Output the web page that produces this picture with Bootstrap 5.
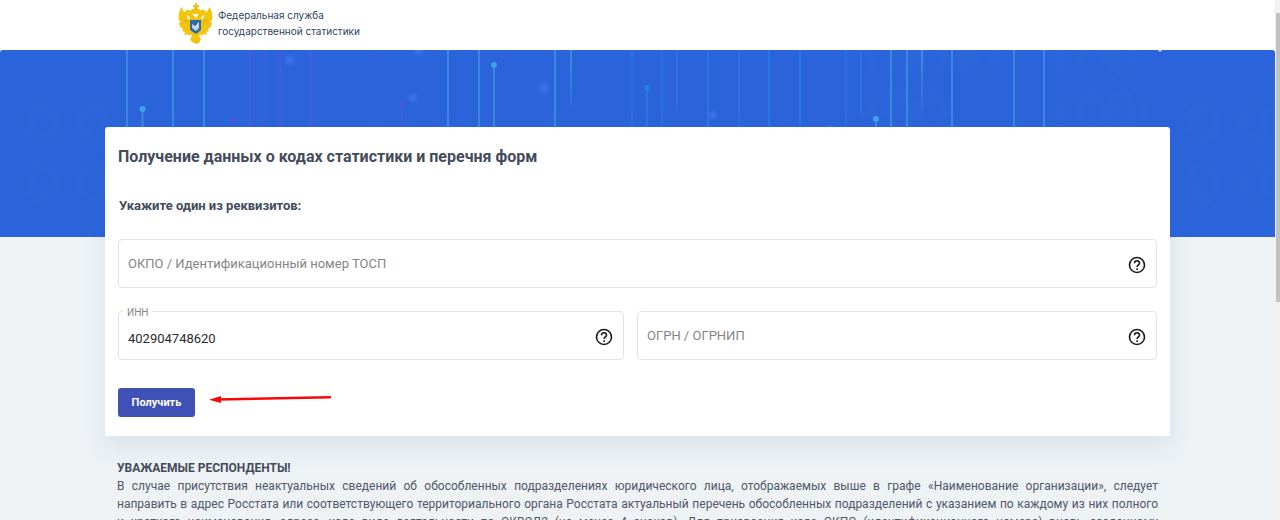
<!DOCTYPE html>
<html lang="ru">
<head>
<meta charset="utf-8">
<meta name="viewport" content="width=device-width, initial-scale=1">
<title>Получение данных о кодах статистики</title>
<link href="https://cdn.jsdelivr.net/npm/bootstrap@5.3.0/dist/css/bootstrap.min.css" rel="stylesheet">
<style>
  body { font-family: Roboto, "Noto Sans", sans-serif; font-size: 12px; line-height: 18px; color: #50586a; background: #eef2f5; }
  .topbar { height: 50px; background: #fff; padding-left: 178px; }
  .brand { gap: 5px; font-family: Inter, "Liberation Sans", sans-serif; font-size: 10px; line-height: 16px; color: #2f4560; }
  .brand:hover { color: #2f4560; }
  .brand-name { padding-top: 7px; }
  .hero { height: 187px; background: #2b64da; border-radius: 3px 3px 0 0; overflow: hidden; }
  .page-main { margin: -110px 105px 0; position: relative; }
  .form-panel { padding: 19px 13px 19px; border: 0; border-radius: 3px; box-shadow: 0 10px 22px rgba(70, 110, 175, .12); }
  h1 { font-size: 16px; line-height: 22px; font-weight: 700; color: #434b5c; margin: 0; }
  h2 { font-size: 13px; line-height: 18px; font-weight: 700; color: #434b5c; margin: 29px 1px 24px; }
  .field { position: relative; }
  .field .form-control { height: 49px; padding: 6px 44px 0 9px; border: 1px solid #e3e3e5; border-radius: 4px; font-size: 13px; color: #2b2b2b; }
  .float-label { position: absolute; left: 5px; top: -6px; padding: 0 4px; font-size: 10px; line-height: 16px; color: #858585; background: #fff; pointer-events: none; }
  .form-control:placeholder-shown:not(:focus) + .float-label { top: 17px; padding-left: 5px; font-size: 13px; }
  .help { position: absolute; right: 11px; top: 17px; width: 18px; height: 18px; padding: 0; border: 0; background: none; line-height: 0; }
  .pair { display: grid; grid-template-columns: 506fr 520fr; gap: 13px; margin-top: 23px; }
  .actions { margin-top: 28px; gap: 13px; }
  .btn-get { width: 77px; height: 29px; padding: 0; font-size: 11px; font-weight: 700; line-height: 18px; color: #fff; background: #3f51b5; border-radius: 3px; }
  .btn-get:hover { color: #fff; background: #3849a5; }
  .notice { margin: 23px 12px 0; }
  .notice strong { color: #434b5c; }
  .notice p { margin: 0; text-align: justify; text-align-last: justify; }
  .rail { width: 5px; background: #f1f1f1; padding: 13px 0 0 1px; }
  .rail-thumb { height: 289px; background: #c1c1c1; }
</style>
</head>
<body>
<div class="d-flex vh-100 overflow-hidden">
  <div class="flex-grow-1">
    <header class="topbar d-flex align-items-start">
      <a class="brand d-flex text-decoration-none" href="#">
        <svg width="35" height="44" viewBox="0 0 35 44" aria-hidden="true">
          <g fill="#f2c40f">
            <path d="M17 3h2v2h2v2h-2v2h2l2 2-2 3h-7l-2-3 2-2h3V7h-2V5h2z"/>
            <path d="M15 15C14 10 9 8 7 12l-3-1 3 4 4 1 1 4 4 4h3l4-4 1-4 4-1 3-4-3 1c-2-4-7-2-8 3l-2 3z"/>
            <path d="M10 19C9 14 5 13 4 7 1 10 0 16 1 20l2 2-2 1c0 3 2 5 4 6l-1 2 3 1-1 3 4-1 1 2 3-3V19zM25 19c1-5 5-6 6-12 3 3 4 9 3 13l-2 2 2 1c0 3-2 5-4 6l1 2-3 1 1 3-4-1-1 2-3-3V19z"/>
            <path d="M11 25h13l-1 7-2 4 2 3-2 4-3 1-4-2-2-3 2-3-3-4z"/>
          </g>
          <path d="M12 20h11v10l-5 4-6-4z" fill="#2f6ba3"/>
          <path d="M14 24l3 2 4-4v6l-3 3-4-3z" fill="#c3d6e4"/>
          <path d="M16 8h4M6 20l4 2M29 20l-4 2" stroke="#dba514" stroke-width="1" fill="none"/>
        </svg>
        <span class="brand-name">Федеральная служба<br>государственной статистики</span>
      </a>
    </header>

    <div class="hero">
      <svg class="d-block" width="100%" height="187" viewBox="0 0 1275 187" preserveAspectRatio="xMidYMid slice" aria-hidden="true">
        <defs>
          <linearGradient id="fade" x1="0" y1="0" x2="0" y2="1"><stop offset="0" stop-color="#42a0e6" stop-opacity=".7"/><stop offset="1" stop-color="#42a0e6" stop-opacity="0"/></linearGradient>
          <radialGradient id="spark"><stop offset="0" stop-color="#5b8cff" stop-opacity=".45"/><stop offset="1" stop-color="#5b8cff" stop-opacity="0"/></radialGradient>
        </defs>
        <g fill="none" stroke="#fff" stroke-opacity=".01" stroke-width="9">
          <path d="M870 0v22M960 0v22M1060 0v22M870 52v20M1060 52v20M1145 52v20"/>
          <ellipse cx="42" cy="72" rx="12" ry="17"/><ellipse cx="94" cy="72" rx="12" ry="17"/>
          <ellipse cx="900" cy="6" rx="12" ry="15"/><ellipse cx="932" cy="6" rx="12" ry="15"/><ellipse cx="984" cy="6" rx="12" ry="15"/><ellipse cx="1092" cy="6" rx="11" ry="15"/><ellipse cx="1122" cy="6" rx="11" ry="15"/>
          <ellipse cx="900" cy="62" rx="12" ry="17"/><ellipse cx="932" cy="62" rx="12" ry="17"/><ellipse cx="1092" cy="62" rx="11" ry="17"/><ellipse cx="1122" cy="62" rx="11" ry="17"/>
          <ellipse cx="1203" cy="72" rx="12" ry="17"/><ellipse cx="1255" cy="72" rx="12" ry="17"/><ellipse cx="1203" cy="133" rx="12" ry="17"/><ellipse cx="1255" cy="133" rx="12" ry="17"/>
          <ellipse cx="42" cy="133" rx="12" ry="17"/><ellipse cx="94" cy="133" rx="12" ry="17"/>
        </g>
        <g stroke="#42a0e6" stroke-width="2" stroke-opacity=".6" fill="#42a0e6">
          <path d="M127 0v90M173 0v90M204 0v90M448 0v90M479 0v90M555 0v90M891 0v90M907 0v90M952 0v90M1014 0v90M1044 0v90M142.500 59v30M494 15v75M876 69v20"/>
          <g stroke="none"><circle cx="142.500" cy="59" r="3"/><circle cx="494" cy="15" r="3"/><circle cx="876" cy="69" r="3"/></g>
        </g>
        <path d="M570 0h2v55h-2zM921 0h2v75h-2z" fill="url(#fade)"/>
        <g stroke="#2389e8" stroke-width="2" stroke-opacity=".55" fill="#2680e2">
          <path d="M647 38v52M708 0v90M769 0v90M800 0v90"/>
          <path d="M632 0v90M662 0v90M677 0v60M739 0v90M846 0v90M861 0v65" stroke-opacity=".35"/>
          <g stroke="none"><circle cx="647" cy="38" r="3"/><circle cx="831" cy="78" r="3"/></g>
        </g>
        <g stroke="#5a55e0" stroke-width="2" stroke-opacity=".5" fill="#4a58dc">
          <path d="M250 0v90M280 0v90M311 0v90M234 70v20M402 55v35"/>
          <path d="M265 0v90M372 0v90" stroke-opacity=".35"/>
          <g stroke="none"><circle cx="234" cy="70" r="3"/><circle cx="402" cy="55" r="3"/></g>
        </g>
        <g fill="url(#spark)"><circle cx="290" cy="10" r="7"/><circle cx="413" cy="48" r="6"/><circle cx="419" cy="1" r="6"/><circle cx="544" cy="38" r="7"/><circle cx="713" cy="65" r="6"/></g>
        <circle cx="1160" cy="0" r="1.500" fill="#fff"/>
      </svg>
    </div>

    <main class="page-main">
      <form class="card form-panel">
        <h1>Получение данных о кодах статистики и перечня форм</h1>
        <h2>Укажите один из реквизитов:</h2>
        <div class="field">
          <input class="form-control" id="okpo" type="text" placeholder=" ">
          <label class="float-label" for="okpo">ОКПО / Идентификационный номер ТОСП</label>
          <button class="help" type="button" aria-label="Справка"><svg width="18" height="18" viewBox="0 0 18 18" fill="none" stroke="#1c1c1c" stroke-width="1.600"><circle cx="9" cy="9" r="7.500"/><path d="M6.500 7.200c0-3.300 5-3.300 5 0 0 1.700-2.400 1.900-2.400 3.900M9.100 12.200v1.700"/></svg></button>
        </div>
        <div class="pair">
          <div class="field">
            <input class="form-control" id="inn" type="text" placeholder=" " value="402904748620">
            <label class="float-label" for="inn">ИНН</label>
            <button class="help" type="button" aria-label="Справка"><svg width="18" height="18" viewBox="0 0 18 18" fill="none" stroke="#1c1c1c" stroke-width="1.600"><circle cx="9" cy="9" r="7.500"/><path d="M6.500 7.200c0-3.300 5-3.300 5 0 0 1.700-2.400 1.900-2.400 3.900M9.100 12.200v1.700"/></svg></button>
          </div>
          <div class="field">
            <input class="form-control" id="ogrn" type="text" placeholder=" ">
            <label class="float-label" for="ogrn">ОГРН / ОГРНИП</label>
            <button class="help" type="button" aria-label="Справка"><svg width="18" height="18" viewBox="0 0 18 18" fill="none" stroke="#1c1c1c" stroke-width="1.600"><circle cx="9" cy="9" r="7.500"/><path d="M6.500 7.200c0-3.300 5-3.300 5 0 0 1.700-2.400 1.900-2.400 3.900M9.100 12.200v1.700"/></svg></button>
          </div>
        </div>
        <div class="actions d-flex">
          <button class="btn btn-get" type="submit">Получить</button>
          <svg width="124" height="20" viewBox="0 0 124 20" aria-hidden="true"><path d="M10 11.500L122 9.200" stroke="#f80707" stroke-width="2.400" stroke-linecap="round"/><path d="M1 11.700L13 8v7z" fill="#f80707"/></svg>
        </div>
      </form>
      <section class="notice">
        <strong>УВАЖАЕМЫЕ РЕСПОНДЕНТЫ!</strong>
        <p>В случае присутствия неактуальных сведений об обособленных подразделениях юридического лица, отображаемых выше в графе «Наименование организации», следует<br>
        направить в адрес Росстата или соответствующего территориального органа Росстата актуальный перечень обособленных подразделений с указанием по каждому из них полного<br>
        и краткого наименования, адреса, кода вида деятельности по ОКВЭД2 (не менее 4 знаков). Для присвоения кода ОКПО (идентификационного номера) вновь созданному</p>
      </section>
    </main>
  </div>
  <div class="rail flex-shrink-0" aria-hidden="true"><div class="rail-thumb"></div></div>
</div>
<script src="https://cdn.jsdelivr.net/npm/bootstrap@5.3.0/dist/js/bootstrap.bundle.min.js"></script>
</body>
</html>
